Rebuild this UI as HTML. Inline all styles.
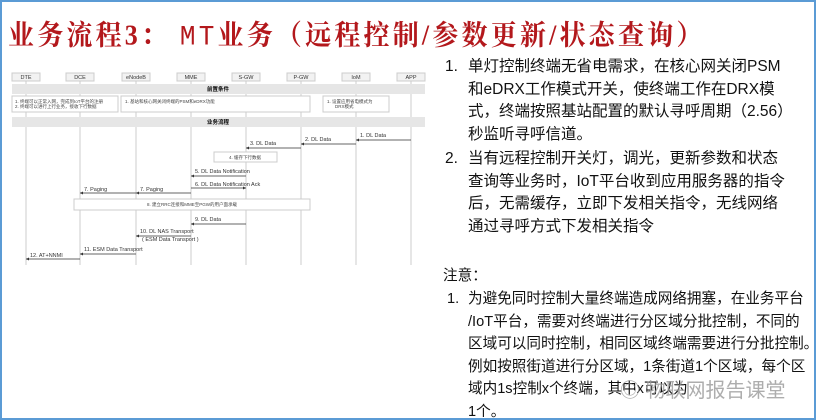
<!DOCTYPE html>
<html><head><meta charset="utf-8"><style>
html,body{margin:0;padding:0;background:#fff}
#p{position:relative;width:812px;height:416px;border:2px solid #5b9bd5;overflow:hidden;font-family:"Liberation Sans","Noto Sans CJK SC",sans-serif;color:#111}
.t{position:absolute;left:6px;top:11px;font-family:"Liberation Serif","Noto Serif CJK SC",serif;font-weight:bold;font-size:26px;color:#b3181c;white-space:nowrap;letter-spacing:3.2px;transform:scaleY(1.08);transform-origin:top left}
.l{position:absolute;font-size:15.5px;white-space:nowrap;line-height:22.5px}
.n{position:absolute;font-size:14.6px;white-space:nowrap;line-height:22.6px}
</style></head><body><div id="p">
<div class="t">业务流程3：  <span style="font-family:'Liberation Mono',monospace;font-weight:normal">MT</span>业务（远程控制/参数更新/状态查询）</div>
<svg style="position:absolute;left:-2px;top:-2px" width="430" height="270" font-family="Liberation Sans,Noto Sans CJK SC,sans-serif">
<g stroke="#ccc" stroke-width="1">
<line x1="26" y1="81" x2="26" y2="265"/><line x1="80" y1="81" x2="80" y2="265"/><line x1="136" y1="81" x2="136" y2="265"/><line x1="191" y1="81" x2="191" y2="265"/><line x1="246" y1="81" x2="246" y2="265"/><line x1="301" y1="81" x2="301" y2="265"/><line x1="356" y1="81" x2="356" y2="265"/><line x1="411" y1="81" x2="411" y2="265"/>
</g>
<g fill="#f2f2f2" stroke="#ccc">
<rect x="12" y="73" width="28" height="8"/><rect x="66" y="73" width="28" height="8"/><rect x="122" y="73" width="28" height="8"/><rect x="177" y="73" width="28" height="8"/><rect x="232" y="73" width="28" height="8"/><rect x="287" y="73" width="28" height="8"/><rect x="342" y="73" width="28" height="8"/><rect x="397" y="73" width="28" height="8"/>
</g>
<g font-size="5.5" text-anchor="middle" fill="#333">
<text x="26" y="79">DTE</text><text x="80" y="79">DCE</text><text x="136" y="79">eNodeB</text><text x="191" y="79">MME</text><text x="246" y="79">S-GW</text><text x="301" y="79">P-GW</text><text x="356" y="79">IoM</text><text x="411" y="79">APP</text>
</g>
<rect x="12" y="84" width="413" height="10" fill="#e6e6e6"/><text x="218" y="91" font-size="5.5" text-anchor="middle" font-weight="bold">前置条件</text>
<g fill="#fff" stroke="#ccc"><rect x="12" y="96" width="106" height="16"/><rect x="121" y="96" width="189" height="16"/><rect x="323" y="96" width="66" height="16"/><rect x="214" y="152" width="63" height="10"/><rect x="74" y="199" width="236" height="11"/></g>
<g font-size="4.5" fill="#444"><text x="15" y="103">1.  终端可以正常入网，完成到IoT平台的注册</text><text x="15" y="108">2.  终端可以进行上行业务，接收下行数据</text><text x="125" y="103">1.  基站和核心网关闭终端的PSM和eDRX功能</text><text x="327" y="103">1.  设置应用省电模式为</text><text x="335" y="108">DRX模式</text>
<text x="245" y="159" text-anchor="middle">4. 缓存下行数据</text><text x="192" y="206" text-anchor="middle">8. 建立RRC连接和MME至PGW的用户面承载</text></g>
<rect x="12" y="117" width="413" height="10" fill="#e6e6e6"/><text x="218" y="124" font-size="5.5" text-anchor="middle" font-weight="bold">业务流程</text>
<g stroke="#333" stroke-width="0.8">
<line x1="411" y1="140" x2="356" y2="140"/><line x1="356" y1="144" x2="301" y2="144"/><line x1="301" y1="148" x2="246" y2="148"/><line x1="246" y1="176" x2="191" y2="176"/><line x1="191" y1="188" x2="246" y2="188"/><line x1="191" y1="193" x2="136" y2="193"/><line x1="136" y1="193" x2="80" y2="193"/><line x1="246" y1="224" x2="191" y2="224"/><line x1="191" y1="236" x2="136" y2="236"/><line x1="136" y1="254" x2="80" y2="254"/><line x1="80" y1="259" x2="26" y2="259"/>
</g>
<g fill="#333"><path d="M356 140l3-1.5v3z"/><path d="M301 144l3-1.5v3z"/><path d="M246 148l3-1.5v3z"/><path d="M191 176l3-1.5v3z"/><path d="M246 188l-3-1.5v3z"/><path d="M136 193l3-1.5v3z"/><path d="M80 193l3-1.5v3z"/><path d="M191 224l3-1.5v3z"/><path d="M136 236l3-1.5v3z"/><path d="M80 254l3-1.5v3z"/><path d="M26 259l3-1.5v3z"/></g>
<g font-size="5.5" fill="#333"><text x="360" y="137">1. DL Data</text><text x="305" y="141">2. DL Data</text><text x="250" y="145">3. DL Data</text><text x="195" y="173">5. DL Data Notification</text><text x="195" y="186">6. DL Data Notification  Ack</text><text x="140" y="191">7. Paging</text><text x="84" y="191">7. Paging</text><text x="195" y="221">9. DL Data</text><text x="140" y="233">10. DL NAS Transport</text><text x="142" y="241">( ESM Data Transport )</text><text x="84" y="251">11. ESM Data Transport</text><text x="30" y="257">12. AT+NNMI</text></g>
</svg>
<div class="l" style="left:443px;top:54px">1.</div>
<div class="l" style="left:466px;top:54px">单灯控制终端无省电需求，在核心网关闭PSM<br>和eDRX工作模式开关，使终端工作在DRX模<br>式，终端按照基站配置的默认寻呼周期（2.56）<br>秒监听寻呼信道。</div>
<div class="l" style="left:443px;top:146px">2.</div>
<div class="l" style="left:466px;top:146px">当有远程控制开关灯，调光，更新参数和状态<br>查询等业务时，IoT平台收到应用服务器的指令<br>后，无需缓存，立即下发相关指令，无线网络<br>通过寻呼方式下发相关指令</div>
<div class="n" style="left:441px;top:263px">注意：</div>
<div class="n" style="left:445px;top:286px">1.</div>
<div class="n" style="left:466px;top:286px">为避免同时控制大量终端造成网络拥塞，在业务平台<br>/IoT平台，需要对终端进行分区域分批控制，不同的<br>区域可以同时控制，相同区域终端需要进行分批控制。<br>例如按照街道进行分区域，1条街道1个区域，每个区<br>域内1s控制x个终端，其中x可以为<br>1个。</div>
<div style="position:absolute;left:618px;top:372px;font-size:20px;color:#999;opacity:.8;white-space:nowrap">◎ 物联网报告课堂</div>
</div></body></html>
